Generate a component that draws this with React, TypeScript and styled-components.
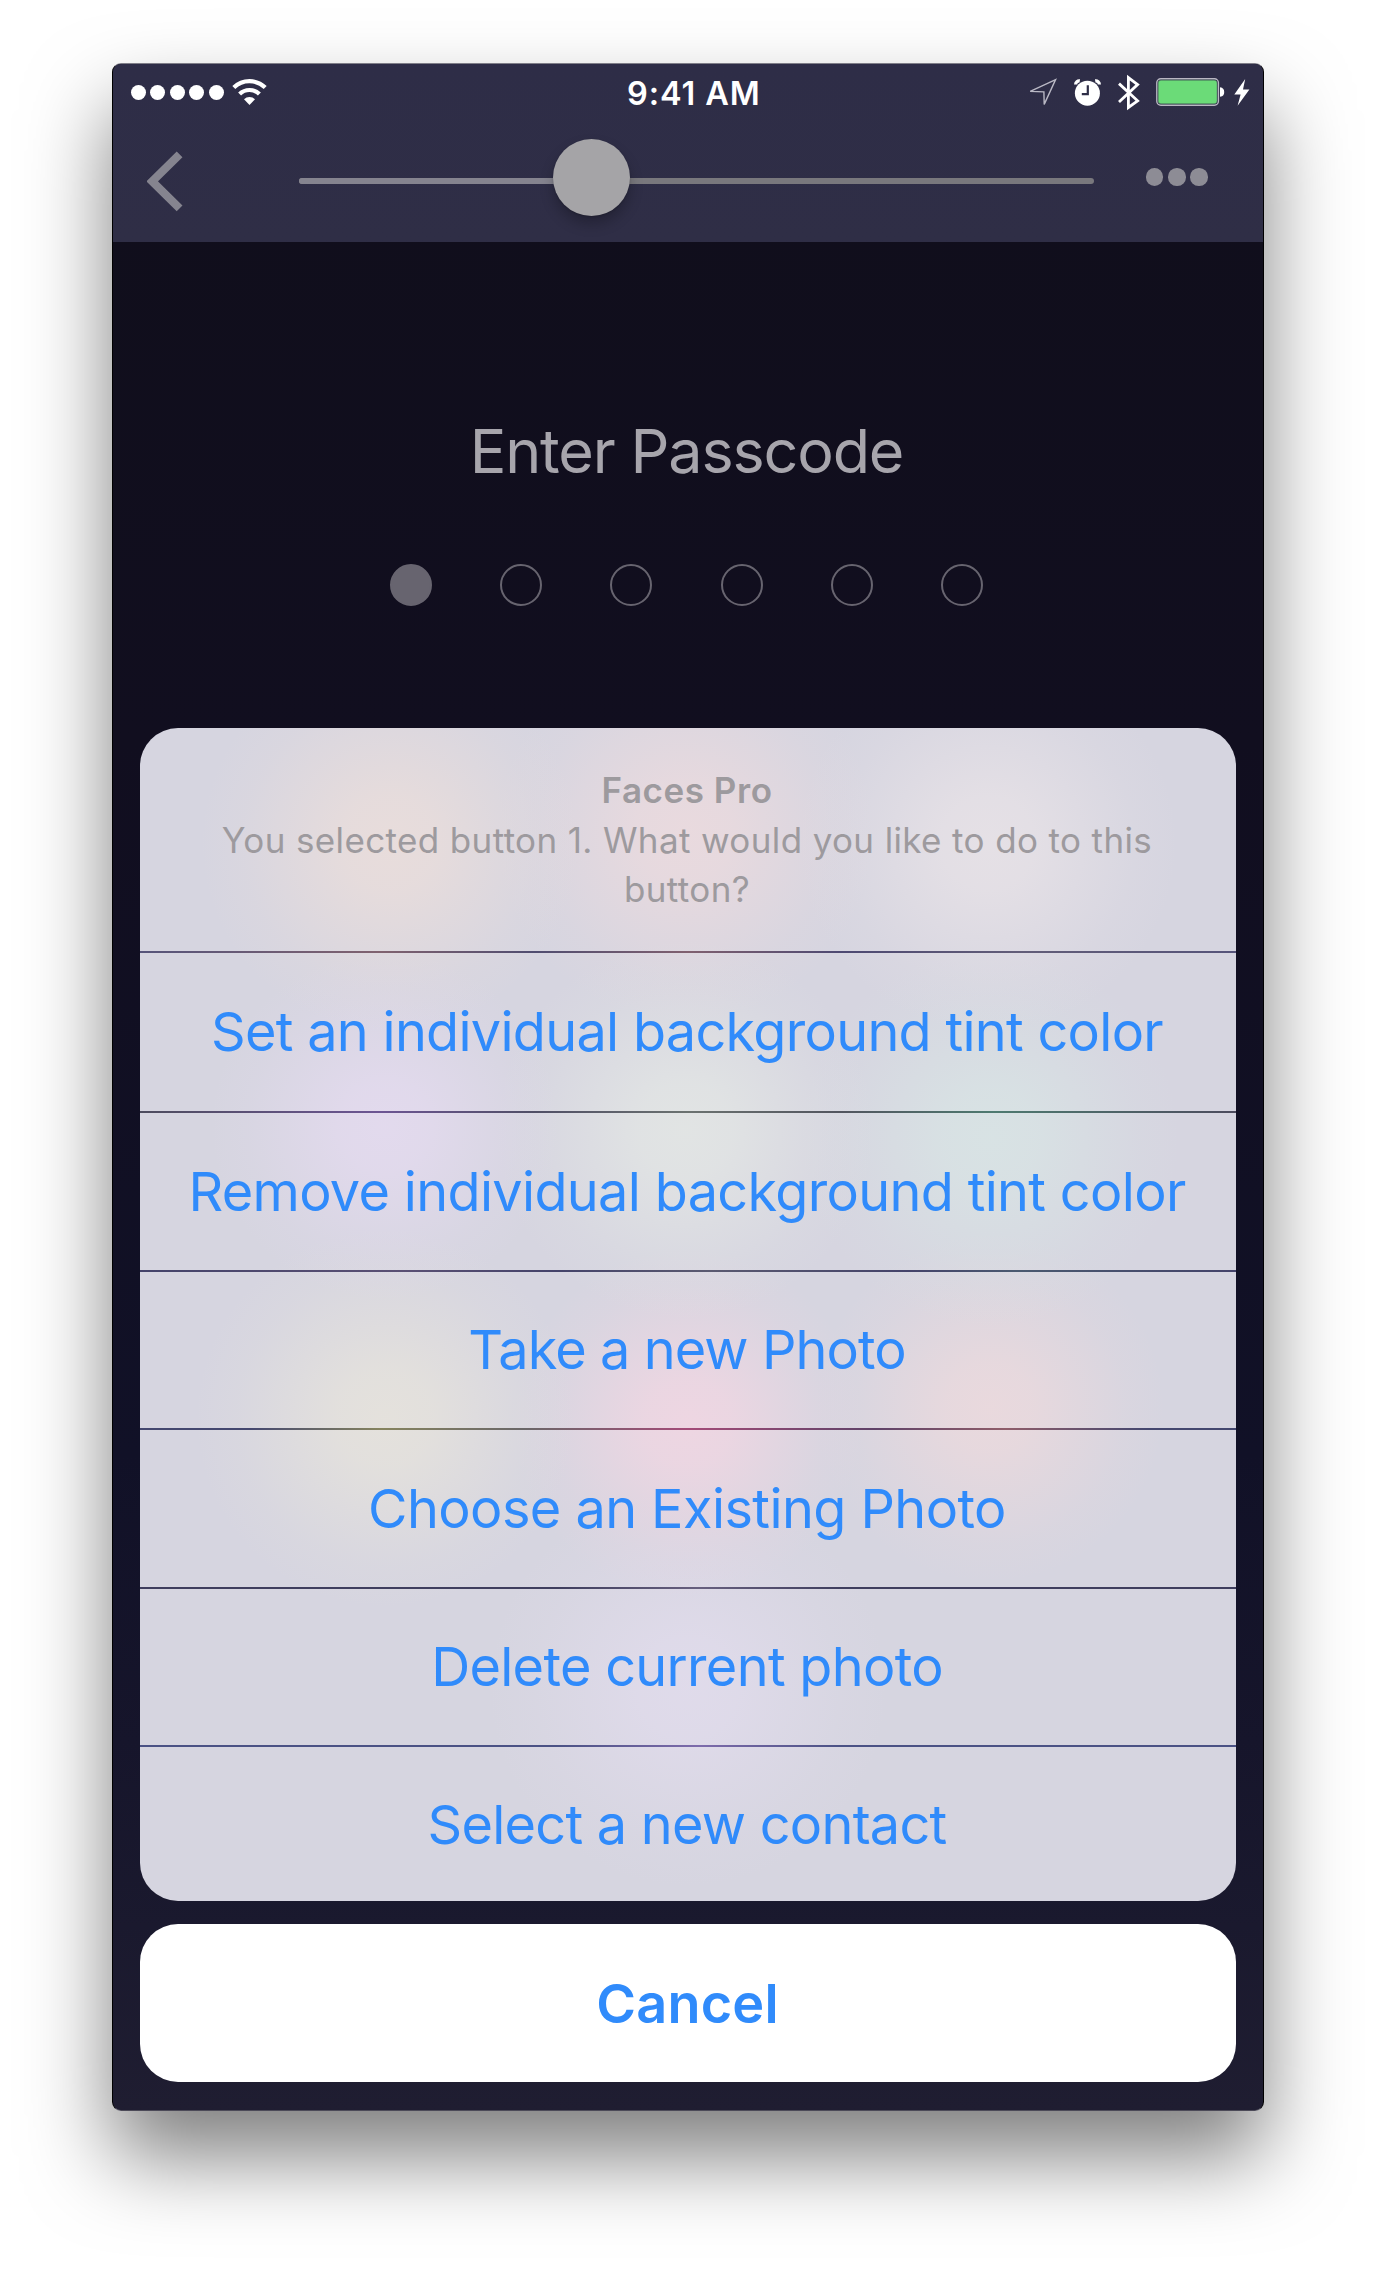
import React from "react";
import styled, { createGlobalStyle, css } from "styled-components";

const GlobalStyle = createGlobalStyle`
  *, *::before, *::after { box-sizing: border-box; }
  body {
    margin: 0;
    background: #ffffff;
    font-family: Inter, "Liberation Sans", sans-serif;
    -webkit-font-smoothing: antialiased;
  }
  button { font: inherit; border: 0; margin: 0; }
`;

const Page = styled.main`
  display: flex;
  justify-content: center;
  width: 1376px;
  height: 2270px;
  padding-top: 63px;
  overflow: hidden;
`;

const Device = styled.div`
  display: flex;
  flex-direction: column;
  width: 1152px;
  height: 2048px;
  overflow: hidden;
  border: 1px solid #000000;
  border-top-color: #7f7e88;
  border-bottom-color: #4c4a58;
  border-radius: 9px;
  background: linear-gradient(
    180deg,
    #100e1b 0%,
    #110e1f 33%,
    #111127 68%,
    #16152b 82%,
    #1a192e 91%,
    #1f1d31 100%
  );
  box-shadow: 0 46px 84px rgba(0, 0, 0, 0.5);
`;

const Header = styled.header`
  flex: none;
  height: 178px;
  background: linear-gradient(180deg, #2e2d47 0%, #2f2e46 100%);
`;

const StatusBar = styled.div`
  display: grid;
  grid-template-columns: 1fr auto 1fr;
  align-items: center;
  height: 56px;
  padding: 0 13.5px 0 18px;
`;

const StatusLeft = styled.div`
  display: flex;
  align-items: center;
  gap: 8.5px;
`;

const Signal = styled.div`
  display: flex;
  gap: 4.4px;
`;

const SignalDot = styled.span`
  width: 15px;
  height: 15px;
  border-radius: 50%;
  background: #ffffff;
`;

const Clock = styled.time`
  padding: 3px 0 0 7px;
  color: #ffffff;
  font-size: 32.5px;
  font-weight: 600;
  letter-spacing: 0.9px;
  line-height: 40px;
`;

const StatusRight = styled.div`
  display: flex;
  align-items: center;
  justify-content: flex-end;
  gap: 15.5px;
`;

const Power = styled.div`
  display: flex;
  align-items: center;
  gap: 8.5px;
`;

const Icon = styled.svg<{ $nudge?: number }>`
  display: block;
  flex: none;
  margin-right: ${(p) => p.$nudge ?? 0}px;
`;

const NavBar = styled.div`
  display: flex;
  align-items: center;
  height: 122px;
  padding-left: 34px;
`;

const BackButton = styled.button`
  padding: 0;
  background: none;
`;

const Slider = styled.div`
  position: relative;
  display: flex;
  width: 795px;
  height: 6px;
  margin-left: 115px;
  border-radius: 3px;
  background: #79787d;
`;

const SliderFill = styled.div`
  width: 36.8%;
  border-radius: 3px 0 0 3px;
  background: #85848f;
`;

const SliderThumb = styled.div`
  position: absolute;
  left: 36.8%;
  top: -39px;
  width: 77px;
  height: 77px;
  margin-left: -38.5px;
  border-radius: 50%;
  background: #a5a4a7;
  box-shadow: 0 8px 14px rgba(0, 0, 0, 0.24), 0 1px 2px rgba(0, 0, 0, 0.16);
`;

const MoreButton = styled.button`
  display: flex;
  gap: 4.8px;
  margin: 0 0 8px 52px;
  padding: 0;
  background: none;
`;

const MoreDot = styled.span`
  width: 17.4px;
  height: 17.4px;
  border-radius: 50%;
  background: #8d8c95;
`;

const Passcode = styled.section`
  display: flex;
  flex: none;
  flex-direction: column;
  align-items: center;
  height: 486px;
  padding-top: 169px;
`;

const PasscodeTitle = styled.h1`
  margin: 0;
  padding-right: 3px;
  color: #a7a5ac;
  font-size: 61px;
  font-weight: 400;
  letter-spacing: -1.15px;
  line-height: 80px;
`;

const Digits = styled.div`
  display: flex;
  gap: 68.3px;
  margin: 73px 3px 0 0;
`;

const Digit = styled.span<{ $filled?: boolean }>`
  width: 42px;
  height: 42px;
  border: 2px solid #67646f;
  border-radius: 50%;
  ${(p) =>
    p.$filled &&
    css`
      background: #67646f;
    `}
`;

const panel = css`
  flex: none;
  width: 1096px;
  margin: 0 auto;
  border-radius: 38px;
  overflow: hidden;
`;

const glow = (x: number, y: number, rgb: string, r = 190) =>
  `radial-gradient(circle ${r}px at ${x}px ${y}px, rgba(${rgb}, 0.95) 0%, rgba(${rgb}, 0.82) 25%, rgba(${rgb}, 0.48) 52%, rgba(${rgb}, 0.16) 78%, rgba(${rgb}, 0) 100%)`;

const Sheet = styled.section`
  ${panel}
  height: 1173px;
  background: ${[
    glow(250, 115, "233, 221, 219"),
    glow(545, 105, "234, 218, 222"),
    glow(848, 115, "230, 225, 230"),
    glow(245, 398, "227, 218, 238", 175),
    glow(545, 402, "226, 229, 228"),
    glow(850, 410, "216, 227, 228"),
    glow(245, 690, "229, 226, 220"),
    glow(548, 695, "239, 214, 226", 175),
    glow(850, 680, "234, 217, 221", 175),
    glow(548, 960, "224, 219, 235", 200),
  ].join(", ")}, #d6d5e0;
`;

const SheetHeader = styled.div`
  height: 223px;
  padding: 38px 82px 0 80px;
  color: #9d9a9e;
  font-size: 35px;
  line-height: 49.7px;
  text-align: center;
`;

const SheetTitle = styled.h2`
  margin: 0;
  font-size: 35px;
  font-weight: 600;
  letter-spacing: 0.55px;
`;

const SheetMessage = styled.p`
  margin: 0;
  letter-spacing: 0.37px;
`;

const Divider = styled.div<{ $tints: string[] }>`
  height: 2px;
  background: linear-gradient(90deg, ${(p) => p.$tints.join(", ")});
`;

const Action = styled.button<{ $height: number; $tracking: number }>`
  display: flex;
  align-items: center;
  justify-content: center;
  width: 100%;
  height: ${(p) => p.$height}px;
  padding: 0 2px 1px 0;
  background: none;
  color: #308bfb;
  font-size: 54px;
  letter-spacing: ${(p) => p.$tracking}px;
  white-space: nowrap;
`;

const Cancel = styled.button`
  ${panel}
  height: 158px;
  margin-top: 23px;
  padding: 0 1px 0 0;
  background: #ffffff;
  color: #308bfb;
  font-size: 54px;
  font-weight: 600;
  letter-spacing: 0.2px;
`;

type ActionItem = {
  label: string;
  height: number;
  tracking: number;
  tints: string[];
};

const actions: ActionItem[] = [
  {
    label: "Set an individual background tint color",
    height: 158,
    tracking: -0.7,
    tints: ["#56547a", "#80626f 22%", "#504d70 36%", "#80606f 50%", "#4d4972 64%", "#625d78 80%", "#56547a"],
  },
  {
    label: "Remove individual background tint color",
    height: 157,
    tracking: -0.66,
    tints: ["#4d4c5e", "#6c5593 22%", "#504f66 36%", "#6b7270 50%", "#52555f 64%", "#4e7a70 78%", "#4d4c5e"],
  },
  {
    label: "Take a new Photo",
    height: 156,
    tracking: -0.9,
    tints: ["#44436a", "#5a5074 24%", "#44436a 38%", "#5a5a70 52%", "#44436a 70%", "#4a5a70 80%", "#44436a"],
  },
  {
    label: "Choose an Existing Photo",
    height: 157,
    tracking: -0.57,
    tints: ["#44476f", "#44476f 10%", "#86845f 22%", "#6a6768 35%", "#a34b78 50%", "#5f4268 67%", "#8f5d6a 79%", "#44476f 92%", "#44476f"],
  },
  {
    label: "Delete current photo",
    height: 156,
    tracking: -0.68,
    tints: ["#3f3e5e", "#3f3e5e 38%", "#675f7e 51%", "#3f3e5e 64%", "#3f3e5e"],
  },
  {
    label: "Select a new contact",
    height: 156,
    tracking: -0.73,
    tints: ["#4b5285", "#4b5285 38%", "#7d6bab 51%", "#4b5285 64%", "#4b5285"],
  },
];

const WifiIcon = () => (
  <Icon width="35" height="27" viewBox="0 0 35 27">
    <g fill="none" stroke="#ffffff" strokeWidth="4.2">
      <path d="M1.8 8.6 A22.4 22.4 0 0 1 33.2 8.6" />
      <path d="M7.6 15 A14.2 14.2 0 0 1 27.4 15" />
    </g>
    <path d="M12 20.2 A7.8 7.8 0 0 1 23 20.2 L17.5 26 Z" fill="#ffffff" />
  </Icon>
);

const LocationIcon = () => (
  <Icon width="28" height="28" viewBox="0 0 28 28" $nudge={2}>
    <path d="M1.2 13.4 L26.6 1.6 L15.2 26.4 L14.9 13.9 Z" fill="none" stroke="#b9b8c4" strokeWidth="1.4" />
  </Icon>
);

const AlarmIcon = () => (
  <Icon width="27" height="27" viewBox="0 0 27 27">
    <circle cx="13.4" cy="14.2" r="12.5" fill="#ffffff" />
    <path d="M1.6 5.4 A3.6 3.6 0 0 1 5.8 1.9 M25.4 5.4 A3.6 3.6 0 0 0 21.2 1.9" fill="none" stroke="#ffffff" strokeWidth="3.2" />
    <path d="M13.8 6.2 V15.2 H7.8" fill="none" stroke="#2e2d47" strokeWidth="2.2" />
  </Icon>
);

const BluetoothIcon = () => (
  <Icon width="24" height="39" viewBox="0 0 24 39">
    <path
      d="M2 10.6 L20.6 27.8 L11.4 34.4 V4.6 L20.6 11.6 L2 29"
      fill="none"
      stroke="#ffffff"
      strokeWidth="2.8"
    />
  </Icon>
);

const BatteryIcon = () => (
  <Icon width="69" height="28" viewBox="0 0 69 28">
    <rect x="0.8" y="0.8" width="61.6" height="26.4" rx="4" fill="none" stroke="#b9b7c2" strokeWidth="1.4" />
    <rect x="2.2" y="2.2" width="58.8" height="23.6" rx="2.8" fill="#6bdb78" stroke="#4a7a5e" strokeWidth="0.5" />
    <path d="M64 9.2 C67.2 9.6 68.2 11.6 68.2 14 C68.2 16.4 67.2 18.4 64 18.8 Z" fill="#ffffff" />
  </Icon>
);

const BoltIcon = () => (
  <Icon width="16" height="27" viewBox="0 0 16 27">
    <path d="M11.2 0 L0.3 15.6 H6.6 L3.6 26.8 L15.4 10.4 H9 Z" fill="#ffffff" />
  </Icon>
);

const BackIcon = () => (
  <Icon width="37" height="61" viewBox="0 0 37 61">
    <path d="M32.6 3.4 L5.2 30.3 L32.6 57.4" fill="none" stroke="#85848f" strokeWidth="8.2" />
  </Icon>
);

export default function App() {
  return (
    <>
      <GlobalStyle />
      <Page>
        <Device>
          <Header>
            <StatusBar>
              <StatusLeft>
                <Signal>
                  {[0, 1, 2, 3, 4].map((i) => (
                    <SignalDot key={i} />
                  ))}
                </Signal>
                <WifiIcon />
              </StatusLeft>
              <Clock>9:41 AM</Clock>
              <StatusRight>
                <LocationIcon />
                <AlarmIcon />
                <BluetoothIcon />
                <Power>
                  <BatteryIcon />
                  <BoltIcon />
                </Power>
              </StatusRight>
            </StatusBar>
            <NavBar>
              <BackButton aria-label="Back">
                <BackIcon />
              </BackButton>
              <Slider>
                <SliderFill />
                <SliderThumb />
              </Slider>
              <MoreButton aria-label="More">
                <MoreDot />
                <MoreDot />
                <MoreDot />
              </MoreButton>
            </NavBar>
          </Header>
          <Passcode>
            <PasscodeTitle>Enter Passcode</PasscodeTitle>
            <Digits>
              {[true, false, false, false, false, false].map((filled, i) => (
                <Digit key={i} $filled={filled} />
              ))}
            </Digits>
          </Passcode>
          <Sheet>
            <SheetHeader>
              <SheetTitle>Faces Pro</SheetTitle>
              <SheetMessage>
                You selected button 1. What would you like to do to this button?
              </SheetMessage>
            </SheetHeader>
            {actions.map((a) => (
              <React.Fragment key={a.label}>
                <Divider $tints={a.tints} />
                <Action $height={a.height} $tracking={a.tracking}>
                  {a.label}
                </Action>
              </React.Fragment>
            ))}
          </Sheet>
          <Cancel>Cancel</Cancel>
        </Device>
      </Page>
    </>
  );
}
